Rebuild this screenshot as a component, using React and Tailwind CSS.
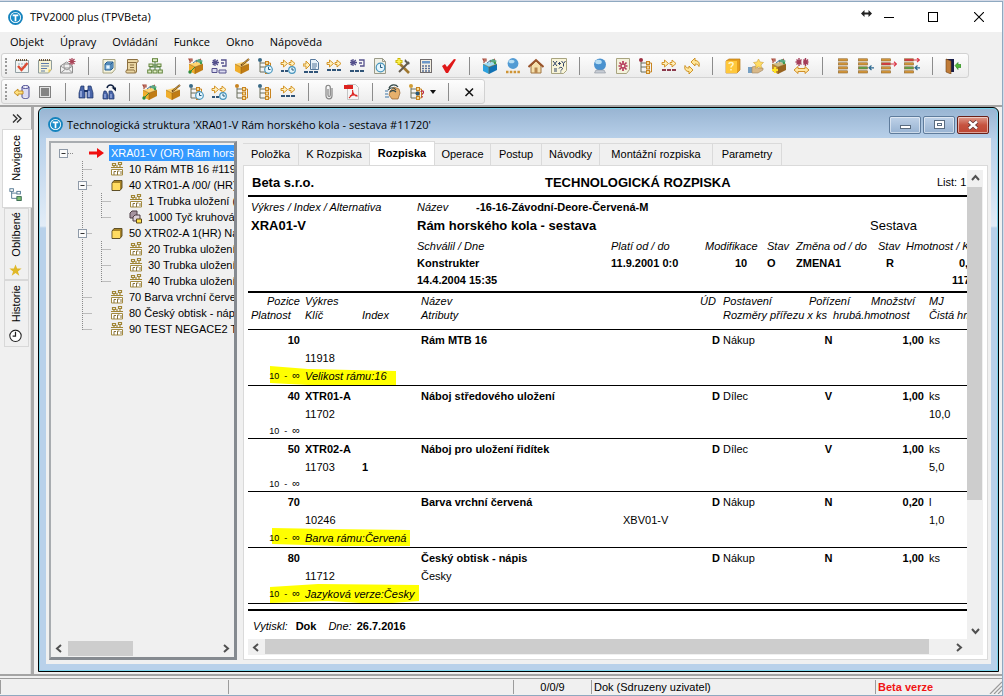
import React, { Fragment } from "react";

/* ---------- icon building blocks, all on a 16 x 16 grid ---------- */

function Svg({ children, className = "h-4 w-4" }) {
  return (
    <svg viewBox="0 0 16 16" className={`shrink-0 ${className}`} aria-hidden="true" fill="none">
      {children}
    </svg>
  );
}

const Box3D = ({ top = "#ffd470", left = "#f0ae2c", right = "#c07c14" }) => (
  <g>
    <path d="M1 6 9 4l6 2-8 3z" fill={top} />
    <path d="M1 6l6 3v7l-6-3z" fill={left} />
    <path d="M7 9l8-3v6l-8 4z" fill={right} />
    <path d="M1 6l6 3v7M7 9l8-3" stroke="#8a5a10" strokeWidth=".5" />
  </g>
);

const Flags = () => (
  <g>
    <path d="M2 1v4M1 1h3v2H2zM8 4l5-3" stroke="#a84838" strokeWidth="1.2" />
    <path d="M7 3l4-2 4 2-3 2z" fill="#5aa884" />
    <path d="M5 5l4-3" stroke="#4878a0" />
    <circle cx="13" cy="5" r="1.2" fill="#3c9a4c" />
  </g>
);

const TreeShape = ({ root = "#3a6a86", c = "#c88420" }) => (
  <g>
    <circle cx="3" cy="2" r="2" fill={root} />
    <path d="M3 4v10h5M3 5h6M3 9h5" stroke="#6b6f5c" />
    <g fill="#f8dc96" stroke={c}>
      <rect x="8.5" y="3.5" width="3" height="3" />
      <rect x="8.5" y="8" width="3" height="3" />
      <rect x="8.5" y="12.5" width="3" height="3" />
    </g>
    <path d="M12 5h1.5v9H12" stroke={c} />
  </g>
);

const ClockShape = ({ x = 11.5, y = 11.5, r = 3.8 }) => (
  <g>
    <circle cx={x} cy={y} r={r} fill="#e4f5fd" stroke="#4795bd" strokeWidth="1.2" />
    <path d={`M${x} ${y - r + 1.2}v${r - 1.2}h2`} stroke="#24587c" />
  </g>
);

const TwinArrows = () => (
  <g fill="#fff0bc" stroke="#d08c18" strokeWidth=".9">
    <path d="M1 4.5h2.5V2l4 3.5-4 3.500V6.5H1z" />
    <path d="M9 4.5h2V2l4 3.5L11 9V6.5H9z" />
  </g>
);

const Dashes = ({ c = "#305478", y = 12 }) => <path d={`M1 ${y}h4M6 ${y}h4M11 ${y}h4`} stroke={c} strokeWidth="2" />;

const Hash = ({ c = "#54508c" }) => (
  <path d="M4 1v7M1 4.5h7M1.8 2l5 5M6.8 2l-5 5M10 2h5v6h-4M10 5h3" stroke={c} strokeWidth="1.3" />
);

const Stack = ({ colors = ["#d89a3c", "#d89a3c", "#d89a3c", "#d89a3c"] }) => (
  <g>
    {colors.map((c, i) => (
      <rect key={i} x=".5" y={i * 4 + 0.8} width="9" height="2.2" fill={c} stroke="#8a6024" strokeWidth=".6" />
    ))}
  </g>
);

const Sheet = ({ fill = "#f4f2dc" }) => (
  <path d="M2 1.5h12v10l-3 3.5H2z" fill={fill} stroke="#a8a480" />
);

const Spiral = () => <path d="M2 2h12" stroke="#6e5638" strokeWidth="2" strokeDasharray="1 1" />;

const ICONS = {
  calendar: (
    <Svg>
      <path d="M1.5 2.5h13v12h-13z" fill="#f1f4f3" stroke="#93a0a4" />
      <Spiral />
      <path d="M4 6h9M4 9h9" stroke="#9aabb8" strokeDasharray="2 1" />
      <path d="M4 8l3.5 4L13.5 5" stroke="#dc4b34" strokeWidth="2.4" />
    </Svg>
  ),
  notepad: (
    <Svg>
      <path d="M1.5 2.5h13v9l-3 3.5h-10z" fill="#f7f3d4" stroke="#8f9c9c" />
      <Spiral />
      <path d="M4 5.5h8M4 8h8M4 10.5h6M4 13h4" stroke="#5d7cac" />
      <path d="M14.5 11.5h-3V15z" fill="#e7cb58" />
    </Svg>
  ),
  mail: (
    <Svg>
      <path d="M.5 8l6-4 6 4v7H.5z" fill="#f0f0f0" stroke="#8c8c8c" />
      <path d="M4 6h6v4H4zM.5 8L7 12l5.5-4M.5 15l5-4M12.5 15l-4-4" stroke="#969696" />
      <path d="M12 0v7M8.5 3.5h7M9.500 1l5 5M14.5 1l-5 5" stroke="#a84458" strokeWidth="1.2" />
    </Svg>
  ),
  pageCube: (
    <Svg>
      <Sheet />
      <path d="M4 6l2-2h6v6l-2 2H4z" fill="#85b8df" stroke="#255c92" />
      <path d="M4 6h6v6M10 6l2-2" stroke="#255c92" />
      <rect x="5.5" y="7.5" width="3" height="3" fill="#eaf6ff" />
    </Svg>
  ),
  scroll: (
    <Svg>
      <path d="M3.5 1.5h10c1 1 1 3-1 3v8.5c0 2-1 2-2 2h-8c-1-1-1-3 1-3z" fill="#ead6a3" stroke="#8c7040" />
      <path d="M4 4.5h8M6 7h4M6 9.5h4M2.5 12h7.5c1 1 1 2 1 3" stroke="#8c7040" />
    </Svg>
  ),
  orgGreen: (
    <Svg>
      <path d="M8 4v8M3 12V9h10v3M3 7h10" stroke="#4c7c40" />
      <g fill="#e0edc6" stroke="#62843c">
        <rect x="5.5" y=".7" width="5" height="3" />
        <rect x="2" y="6" width="4" height="2.5" />
        <rect x="10" y="6" width="4" height="2.5" />
        <rect x=".7" y="12" width="4" height="3" />
        <rect x="6" y="12" width="4" height="3" />
        <rect x="11.3" y="12" width="4" height="3" />
      </g>
    </Svg>
  ),
  boxFlags: (
    <Svg>
      <Box3D />
      <Flags />
      <circle cx="2" cy="14" r="1.700" fill="#2c8c3c" />
      <path d="M3 13L7 9" stroke="#2c8c3c" />
    </Svg>
  ),
  hashGrid: (
    <Svg>
      <Hash />
      <path d="M1 10.5h5v4H1zM8 12h7v3H8z" fill="#dcdcf0" stroke="#54508c" />
    </Svg>
  ),
  boxPencil: (
    <Svg>
      <Box3D />
      <path d="M15 1L7 7.5" stroke="#6c441c" strokeWidth="2" />
      <path d="M15 1L8 6.5" stroke="#f0c044" strokeWidth=".8" />
    </Svg>
  ),
  treeClock: (
    <Svg>
      <TreeShape />
      <ClockShape />
    </Svg>
  ),
  arrowsClock: (
    <Svg>
      <TwinArrows />
      <path d="M1 13h3M5 13h3" stroke="#305478" strokeWidth="2" />
      <ClockShape x={12} y={12} r={3.3} />
    </Svg>
  ),
  arrowsPage: (
    <Svg>
      <path d="M0 6h3V3l4 4-4 4V8H0z" fill="#fff0bc" stroke="#d08c18" strokeWidth=".9" />
      <path d="M7.5 1.5h5l3 3v7h-8z" fill="#e8f1f8" stroke="#56789c" />
      <path d="M9 6h5M9 8h5M9 10h4" stroke="#56789c" />
      <Dashes y={14} />
    </Svg>
  ),
  arrows: (
    <Svg>
      <TwinArrows />
      <Dashes />
    </Svg>
  ),
  hashDash: (
    <Svg>
      <Hash />
      <Dashes y={13} />
    </Svg>
  ),
  pageClock: (
    <Svg>
      <path d="M2.5 .5h8l3 3v12h-11z" fill="#eff0e6" stroke="#9a9a88" />
      <path d="M10.5 .5v3h3" stroke="#9a9a88" />
      <ClockShape x={8.5} y={9.5} r={4.3} />
    </Svg>
  ),
  tools: (
    <Svg>
      <path d="M5 6l9 9" stroke="#a07830" strokeWidth="2.6" />
      <path d="M14 4L4 14" stroke="#665c4c" strokeWidth="2" />
      <path d="M10 1l5 5-2 .5-3.5-3z" fill="#5c5c54" />
      <path d="M4 0v7M.5 3.5h7" stroke="#c8b400" strokeWidth="3" />
      <path d="M4 1v5M1.5 3.5h5" stroke="#fff450" strokeWidth="1.6" />
    </Svg>
  ),
  calculator: (
    <Svg>
      <rect x="2.5" y="1.5" width="11" height="13" fill="#f3efe2" stroke="#716c6c" />
      <rect x="4" y="3" width="8" height="2.5" fill="#6c98c8" />
      <path d="M4 8h8M4 10.5h8M4 13h8" stroke="#576f98" strokeWidth="1.5" strokeDasharray="2 1" />
    </Svg>
  ),
  redCheck: (
    <Svg>
      <path d="M1 8l3-2 2 3L13 1l2 .5L7 15H5z" fill="#e01818" />
    </Svg>
  ),
  blueBox: (
    <Svg>
      <Box3D top="#9cdcf4" left="#2da2e0" right="#1272b4" />
      <Flags />
    </Svg>
  ),
  sphereDots: (
    <Svg>
      <circle cx="8" cy="5.5" r="5.4" fill="#529bd4" />
      <ellipse cx="6.5" cy="3.5" rx="3" ry="1.8" fill="#b7def4" />
      <path d="M1 14h14" stroke="#cf9434" strokeWidth="2.4" strokeDasharray="2.5 1.3" />
    </Svg>
  ),
  house: (
    <Svg>
      <path d="M3 8l5-5 5 5v7H3z" fill="#f5dfab" stroke="#a07440" />
      <path d="M.5 9L8 2l7.5 7" stroke="#9a552c" strokeWidth="2" />
      <rect x="6.5" y="9.5" width="3" height="5.5" fill="#b88850" />
    </Svg>
  ),
  formula: (
    <Svg>
      <path d="M.5 .5h15v12l-3 3H.5z" fill="#f8f4d8" stroke="#a8a480" />
      <path
        d="M2 3l4 5M6 3L2 8M7 5.5h3M8.5 4v3M10.500 3l2 2.500L14.500 3M12.500 5.500v3M3 11h3M3 13h3M8 10.5c0-1.500 3.500-1.500 3.500 0s-1.700 1-1.700 2M9.800 13.500v1"
        stroke="#304468"
      />
    </Svg>
  ),
  crystal: (
    <Svg>
      <circle cx="8" cy="6.5" r="6" fill="#4a92cf" />
      <ellipse cx="6.5" cy="4" rx="3.3" ry="2.2" fill="#b7def4" />
      <path d="M4 12h8l1.5 3h-11z" fill="#c7ccd4" stroke="#8b929c" strokeWidth=".6" />
    </Svg>
  ),
  redGearPage: (
    <Svg>
      <path d="M1.500 .5h13v11l-3 4h-10z" fill="#f4f2dc" stroke="#a8a480" />
      <path d="M8 3v10M3.5 8h9M4.5 4.5l7 7M11.5 4.5l-7 7" stroke="#b43858" strokeWidth="1.700" />
      <circle cx="8" cy="8" r="1.3" fill="#f4f2dc" />
    </Svg>
  ),
  treeMaroon: (
    <Svg>
      <TreeShape root="#9c3040" />
    </Svg>
  ),
  arrowsMaroon: (
    <Svg>
      <TwinArrows />
      <Dashes c="#8c3a4c" />
    </Svg>
  ),
  refresh: (
    <Svg>
      <g fill="#ffe69a" stroke="#c98a18" strokeWidth=".9">
        <path d="M7 4l4-4v2.5c3 0 5 2 4 6-1-2-2-2.5-4-2.500V8z" />
        <path d="M9 12l-4 4v-2.5c-3 0-5-2-4-6 1 2 2 2.5 4 2.500V8z" />
      </g>
    </Svg>
  ),
  goldBox: (
    <Svg>
      <path d="M1 3l3-2h11v11l-3 3H1z" fill="#e8a01c" stroke="#b87818" strokeWidth=".7" />
      <path d="M1 3h11v12H1z" fill="#ffc83c" />
      <path d="M4 6c0-2 4-2 4 0s-2 1.5-2 3.5M6 11v1.5" stroke="#fff6c8" strokeWidth="1.5" />
    </Svg>
  ),
  handStar: (
    <Svg>
      <path d="M0 9h4v6H0z" fill="#76a0c4" />
      <path d="M4 9l4-1 2 2h5v2l-5 3H4z" fill="#d8b888" stroke="#9f8560" strokeWidth=".6" />
      <path d="M10.5 1l1.6 3 3.4.5-2.5 2.4.6 3.4-3.100-1.600-3 1.600.5-3.400L5.5 4.500 9 4z" fill="#ffdc64" stroke="#cfa23c" strokeWidth=".6" />
    </Svg>
  ),
  boxStar: (
    <Svg>
      <Box3D top="#d0bc84" left="#c08c34" right="#986420" />
      <Flags />
      <path d="M4 9v6M1 12h6" stroke="#ffe424" strokeWidth="2.2" />
    </Svg>
  ),
  gearsArrow: (
    <Svg>
      <path d="M5 0v8M1.5 4h6M2.5 1.500l5 5M7.5 1.500l-5 5M11.500 0v8M9 4h5.500M9.500 1.500l4.500 5M14 1.500l-4.500 5" stroke="#a43c58" strokeWidth="1.4" />
      <path d="M0 12l4-3.5v2h7v-2l4 3.500-4 3.500v-2H4v2z" fill="#ffe5a0" stroke="#cc8718" strokeWidth=".9" />
    </Svg>
  ),
  list: (
    <Svg>
      <g transform="translate(3 0)">
        <Stack />
      </g>
    </Svg>
  ),
  listBlue: (
    <Svg>
      <Stack colors={["#d89a3c", "#d89a3c", "#58a850", "#d89a3c"]} />
      <path d="M16 9.800h-5M13.5 7.500L11 9.800l2.500 2.200" stroke="#2c6890" strokeWidth="1.2" />
    </Svg>
  ),
  listRed: (
    <Svg>
      <Stack colors={["#d89a3c", "#dc3848", "#d89a3c", "#d89a3c"]} />
      <path d="M10 6h5.5M13 3.800L15.500 6 13 8.200" stroke="#dc3848" strokeWidth="1.2" />
    </Svg>
  ),
  listBoth: (
    <Svg>
      <Stack colors={["#dc3848", "#d89a3c", "#58a850", "#d89a3c"]} />
      <path d="M10 2h5.5M13 0l2.500 2L13 4" stroke="#dc3848" strokeWidth="1.2" />
      <path d="M16 9.800h-5M13.5 7.500L11 9.800l2.500 2.200" stroke="#2c6890" strokeWidth="1.2" />
    </Svg>
  ),
  door: (
    <Svg>
      <path d="M1 1h8v13H1z" fill="#181c48" />
      <path d="M1 1l5 2v13l-5-2z" fill="#c07c38" stroke="#6f4014" strokeWidth=".6" />
      <path d="M10 7.500l3-3v2h3v3h-3v2z" fill="#50b838" stroke="#2a7c20" strokeWidth=".6" />
    </Svg>
  ),
  importDb: (
    <Svg>
      <path d="M8 3h7v10H8z" fill="#dcdcf4" />
      <ellipse cx="11.5" cy="3" rx="3.5" ry="1.5" fill="#f4f4fc" stroke="#4c4c94" />
      <path d="M8 3v10c0 2 7 2 7 0V3" stroke="#4c4c94" />
      <path d="M0 8.500L4 5v2h5v3H4v2z" fill="#ffe080" stroke="#bf8818" strokeWidth=".9" />
    </Svg>
  ),
  stop: (
    <Svg>
      <rect x="2.5" y="2.5" width="11" height="11" fill="#e4e4e4" stroke="#808080" />
      <rect x="4" y="4" width="8" height="8" fill="#848484" />
    </Svg>
  ),
  binoculars: (
    <Svg>
      <path d="M3 2h3v3l1 3v6H1V9zM10 2h3l2 7v5H9V8l1-3z" fill="#4864a8" stroke="#1c3468" strokeWidth=".7" />
      <path d="M3 7v6M11 7v6" stroke="#b8c8f4" strokeWidth="1.2" />
      <path d="M6 7h4" stroke="#1c3468" strokeWidth="2" />
    </Svg>
  ),
  binocularsNext: (
    <Svg>
      <path d="M3 7h2l2 4v4H2v-4zM8 7h3l2 4v4H8z" fill="#4864a8" stroke="#1c3468" strokeWidth=".7" />
      <path d="M4 10v4M10 10v4" stroke="#b8c8f4" />
      <path d="M6 4c1-4 6-4 7 0" stroke="#102040" strokeWidth="1.5" />
      <path d="M10.5 3.500H15v4z" fill="#102040" />
    </Svg>
  ),
  treeGold: (
    <Svg>
      <TreeShape root="#c88420" />
    </Svg>
  ),
  tree: (
    <Svg>
      <TreeShape />
    </Svg>
  ),
  clip: (
    <Svg>
      <path d="M11 4v7.5c0 4.500-6 4.500-6 0V3.500c0-3 4.300-3 4.300 0V11c0 2-2.300 2-2.300 0V5" stroke="#848484" strokeWidth="1.2" />
    </Svg>
  ),
  pdf: (
    <Svg>
      <path d="M3.5 .5h8l3 3v12h-11z" fill="#f6f6f6" stroke="#c4c4c4" />
      <path d="M0 1h9v4H0z" fill="#dc2420" />
      <path d="M8.500 6c1 3-1 6-3.500 8M8.700 8c1 3 2 4 5 4M6 12c2-1 5-1.500 7-.5" stroke="#dc2420" strokeWidth="1.2" />
    </Svg>
  ),
  grab: (
    <Svg>
      <path d="M5 7l4-4 5 2 1 4-2 6H7L4 11z" fill="#e6b06c" stroke="#94602c" strokeWidth=".7" />
      <path d="M4 4c2-4 7-4 9-1M3 6c3-3 6-3 8 0M5 8c2-2 4-2 6 0" stroke="#334848" strokeWidth="1.2" />
      <path d="M0 7h3M0 10h3M0 13h4" stroke="#3d74a4" />
    </Svg>
  ),
  treeHelp: (
    <Svg>
      <TreeShape root="#d09c34" />
      <circle cx="9.5" cy="9.500" r="2" fill="#285878" />
      <path d="M13 8c0-1.500 2.500-1.500 2.500.2s-1.300 1-1.300 2.600M14.200 12v1.500" stroke="#b82840" strokeWidth="1.2" />
    </Svg>
  ),
  close: (
    <Svg>
      <path d="M4.5 4.500l7.500 7.500M12 4.500L4.500 12" stroke="#111" strokeWidth="1.5" />
    </Svg>
  ),
};

const TOOLBAR_MAIN = [
  ["calendar", "notepad", "mail"],
  ["pageCube", "scroll", "orgGreen"],
  ["boxFlags", "hashGrid", "boxPencil", "treeClock", "arrowsClock", "arrowsPage", "arrows", "hashDash", "pageClock", "tools", "calculator", "redCheck"],
  ["blueBox", "sphereDots", "house", "formula"],
  ["crystal", "redGearPage", "treeMaroon", "arrowsMaroon", "refresh"],
  ["goldBox", "handStar", "boxStar", "gearsArrow"],
  ["list", "listBlue", "listRed", "listBoth"],
  ["door"],
];

const TOOLBAR_WINDOW = [
  ["importDb", "stop"],
  ["binoculars", "binocularsNext"],
  ["boxFlags", "boxPencil", "treeClock", "arrowsClock", "treeGold", "tree", "arrows"],
  ["clip", "pdf"],
  ["grab", "treeHelp", "dropdown"],
  ["close"],
];

function Toolbar({ groups, label }) {
  return (
    <div
      role="toolbar"
      aria-label={label}
      className="flex h-[25px] w-fit items-center rounded-[3px] border border-[#d2d2d2] bg-gradient-to-b from-[#fdfdfd] to-[#ececec] pr-[4px]"
    >
      <span className="ml-[3px] mr-[3px] h-4 w-[2px] border-l-2 border-dotted border-[#9a9a9a]" />
      {groups.map((group, i) => (
        <Fragment key={i}>
          {i > 0 && (
            <span className="flex w-[18px] justify-center">
              <span className="h-[18px] w-px bg-[#8c8c8c]" />
            </span>
          )}
          {group.map((name) =>
            name === "dropdown" ? (
              <button key={name} type="button" aria-label={name} className="flex w-[12px] items-center justify-center">
                <svg viewBox="0 0 6 4" className="h-1 w-1.5" aria-hidden="true">
                  <path d="M0 0h6L3 4z" fill="#111" />
                </svg>
              </button>
            ) : (
              <button key={name} type="button" aria-label={name} className="flex h-[23px] w-[23px] items-center justify-center">
                {ICONS[name]}
              </button>
            )
          )}
        </Fragment>
      ))}
    </div>
  );
}

function Logo() {
  return (
    <Svg className="h-[15px] w-[15px]">
      <circle cx="8" cy="8" r="6.9" fill="#fff" stroke="#1583bd" strokeWidth="2" />
      <circle cx="8" cy="8" r="5" fill="#1a8cc8" />
      <path d="M5 5.7h6M8 5.700V12" stroke="#fff" strokeWidth="1.8" />
    </Svg>
  );
}

/* ---------- navigation rail ---------- */

function RailTab({ icon, children, active, className }) {
  return (
    <button
      type="button"
      className={`flex items-center justify-center border border-[#d8d8d8] ${className} ${
        active ? "w-[30px] border-r-0 bg-white pr-1" : "ml-[2px] w-[25px] self-start bg-[#f0f0f0] pr-px"
      }`}
    >
      <span className="flex rotate-180 items-center gap-[7px] text-[11px] leading-4 [writing-mode:vertical-rl]">
        <span className="rotate-180">{icon}</span>
        {children}
      </span>
    </button>
  );
}

function Rail() {
  return (
    <nav className="flex w-[34px] shrink-0 flex-col border-r-[3px] border-[#a9a9a9] bg-[#f0f0f0] pl-[2px]">
      <button type="button" aria-label="Rozbalit" className="flex h-[22px] items-center justify-center">
        <svg viewBox="0 0 10 9" className="h-[9px] w-[10px]" fill="none" stroke="#333" strokeWidth="1.4" aria-hidden="true">
          <path d="M1 .5l4 4-4 4M5 .5l4 4-4 4" />
        </svg>
      </button>
      <div className="flex flex-1 flex-col border-r border-[#dcdcdc]">
        <RailTab
          active
          className="h-[79px]"
          icon={
            <Svg className="h-[14px] w-[14px]">
              <path d="M3 4v8h6M3 6h6" stroke="#4a708c" />
              <rect x="1" y="1" width="4" height="3" fill="#fff" stroke="#4a708c" />
              <rect x="9" y="4" width="4" height="3" fill="#fff" stroke="#4a708c" />
              <rect x="9" y="10" width="5" height="4.5" fill="#7fc070" stroke="#2c5f48" />
            </Svg>
          }
        >
          Navigace
        </RailTab>
        <RailTab
          className="h-[72px]"
          icon={
            <Svg className="h-[13px] w-[13px]">
              <path d="M8 1l2 5h5.5L11 9.5l1.7 5.500L8 11.5 3.300 15 5 9.500.5 6H6z" fill="#e0b828" />
            </Svg>
          }
        >
          Oblíbené
        </RailTab>
        <RailTab
          className="h-[67px]"
          icon={
            <Svg className="h-[13px] w-[13px]">
              <circle cx="8" cy="8" r="7" fill="#fff" stroke="#222" strokeWidth="1.3" />
              <path d="M8 3v5.500H4.5" stroke="#222" strokeWidth="1.5" />
            </Svg>
          }
        >
          Historie
        </RailTab>
      </div>
    </nav>
  );
}

/* ---------- structure tree ---------- */

const TREE = [
  { level: 0, open: true, icon: "arrow", text: "XRA01-V (OR) Rám hors", selected: true },
  { level: 1, icon: "part", text: "10 Rám MTB 16 #119", line: "mid" },
  { level: 1, open: true, icon: "cube", text: "40 XTR01-A /00/ (HR)", line: "mid" },
  { level: 2, icon: "part", text: "1 Trubka uložení (", line: "mid", trunk: true },
  { level: 2, icon: "bars", text: "1000 Tyč kruhová", line: "end", trunk: true },
  { level: 1, open: true, icon: "cube", text: "50 XTR02-A 1(HR) Ná", line: "mid" },
  { level: 2, icon: "part", text: "20 Trubka uložení", line: "mid", trunk: true },
  { level: 2, icon: "part", text: "30 Trubka uložení", line: "mid", trunk: true },
  { level: 2, icon: "part", text: "40 Trubka uložení", line: "end", trunk: true },
  { level: 1, icon: "part", text: "70 Barva vrchní červe", line: "mid" },
  { level: 1, icon: "part", text: "80 Český obtisk - náp", line: "mid" },
  { level: 1, icon: "part", text: "90 TEST NEGACE2 TE", line: "end" },
];

const TREE_ICONS = {
  part: (
    <svg viewBox="0 0 14 14" className="h-[14px] w-[14px] shrink-0" fill="none" aria-hidden="true">
      <path d="M2.5 1.5h3v2h-3zM8.5 .5h3v2h-3zM1 5.5h12M4 3.5v2M10 3v3M7 3v3" stroke="#a08534" strokeWidth="1.2" />
      <path d="M1.5 7.5h11v5.5h-11z" fill="#fff" stroke="#a38b40" />
      <path d="M4 13V9.5h2M7.500 13V9h2M11 12V9" stroke="#87733c" />
    </svg>
  ),
  cube: (
    <svg viewBox="0 0 14 14" className="h-[14px] w-[14px] shrink-0" aria-hidden="true">
      <path d="M2 5l2-2.500h8V10l-2 2.500H2z" fill="#a88428" stroke="#52441c" strokeWidth=".9" />
      <path d="M2.500 5H10v7H2.500z" fill="#ffdb61" />
    </svg>
  ),
  bars: (
    <svg viewBox="0 0 14 14" className="h-[14px] w-[14px] shrink-0" aria-hidden="true">
      <path d="M1 3l2-2h5v5L6 8H1z" fill="#a694a0" stroke="#4c3c44" />
      <path d="M4 7l2-2h5v4l-2 2H4z" fill="#dcd0d8" stroke="#4c3c44" />
      <path d="M7.5 9h5v4h-5z" fill="#ffe04c" stroke="#5e4a1c" />
    </svg>
  ),
};

function Guides({ item }) {
  const width = item.level === 2 ? 78 : item.level === 1 ? 59 : 38;
  const x = item.level === 2 ? 50.5 : 31.5;
  const boxX = item.level === 0 ? 8.5 : 27.5;
  return (
    <svg width={width} height="16" className="shrink-0" fill="none" aria-hidden="true">
      <g stroke="#8a8a8a" strokeDasharray="1 1">
        {item.line && <path d={`M${x} 0V${item.line === "mid" ? 16 : 9}M${x} 8.5h10`} />}
        {item.trunk && <path d="M31.5 0V16" />}
        {item.level === 0 && <path d="M17 8.5h6" />}
      </g>
      {item.open && (
        <>
          <rect x={boxX} y="4.5" width="8" height="8" fill="#fafafa" stroke="#8f9aa8" />
          <path d={`M${boxX + 2} 8.5h4`} stroke="#333" />
        </>
      )}
    </svg>
  );
}

function Tree() {
  return (
    <div className="flex w-[188px] shrink-0 flex-col border-2 border-b-[3px] border-r-[3px] border-[#858a90] border-l-[#a8acb0] border-t-[#a8acb0] bg-[#f0f0f0]">
      <ul className="flex-1 overflow-hidden whitespace-nowrap pt-[2px] text-[11px] leading-4">
        {TREE.map((item) => (
          <li key={item.text} className="flex h-4 items-center">
            <Guides item={item} />
            {item.icon === "arrow" ? (
              <span className="flex w-5 shrink-0 items-center">
                <svg viewBox="0 0 15 10" className="h-[10px] w-[15px]" aria-hidden="true">
                  <path d="M0 3.5h8V0l7 5-7 5V6.5H0z" fill="#f00f0f" />
                </svg>
              </span>
            ) : (
              TREE_ICONS[item.icon]
            )}
            <span className={item.selected ? "flex-1 bg-[#3399ff] pl-[2px] text-white" : "pl-[5px]"}>{item.text}</span>
          </li>
        ))}
      </ul>
      <div className="flex h-[18px] items-center">
        <ScrollButton dir="left" />
        <div className="flex-1">
          <div className="h-[15px] w-[65px] bg-[#cdcdcd]" />
        </div>
        <ScrollButton dir="right" />
      </div>
    </div>
  );
}

const CHEVRONS = {
  left: "M6 1L2 4.5 6 8",
  right: "M3 1l4 3.5L3 8",
  up: "M1 6l3.5-4L8 6",
  down: "M1 3l3.5 4L8 3",
};

function ScrollButton({ dir }) {
  return (
    <button type="button" aria-label={dir} className="flex h-[17px] w-[17px] shrink-0 items-center justify-center">
      <svg viewBox="0 0 9 9" className="h-[9px] w-[9px]" fill="none" stroke="#505050" strokeWidth="2" aria-hidden="true">
        <path d={CHEVRONS[dir]} />
      </svg>
    </button>
  );
}

/* ---------- report ---------- */

const ITEMS = [
  { pos: "10", key: "11918", name: "Rám MTB 16", kind: "Nákup", get: "N", qty: "1,00", unit: "ks", attr: "Velikost rámu:16", mark: "2,0 40,3 128,5 128,20 60,20 2,17" },
  { pos: "40", drawing: "XTR01-A", key: "11702", name: "Náboj středového uložení", kind: "Dílec", get: "V", qty: "1,00", unit: "ks", net: "10,0" },
  { pos: "50", drawing: "XTR02-A", key: "11703", index: "1", name: "Náboj pro uložení řidítek", kind: "Dílec", get: "V", qty: "1,00", unit: "ks", net: "5,0" },
  { pos: "70", key: "10246", name: "Barva vrchní červená", kind: "Nákup", get: "N", qty: "0,20", unit: "l", net: "1,0", extra: "XBV01-V", attr: "Barva rámu:Červená", mark: "4,0 60,1 142,2 142,18 70,18 4,16" },
  { pos: "80", key: "11712", name: "Český obtisk - nápis", sub: "Česky", kind: "Nákup", get: "N", qty: "1,00", unit: "ks", attr: "Jazyková verze:Česky", mark: "2,3 50,0 151,1 151,17 110,20 60,17 2,19" },
];

function ItemRows({ item }) {
  return (
    <tbody className="[&>tr:first-child>td]:border-t [&>tr:first-child>td]:border-black">
      <tr className="h-[21px] font-bold">
        <td className="pr-[5px] text-right">{item.pos}</td>
        <td colSpan={2}>{item.drawing}</td>
        <td>{item.name}</td>
        <td className="pr-[3px] text-right">D</td>
        <td className="font-normal">{item.kind}</td>
        <td className="text-center">{item.get}</td>
        <td className="pr-[5px] text-right">{item.qty}</td>
        <td className="font-normal">{item.unit}</td>
      </tr>
      <tr className="h-[17px]">
        <td />
        <td>{item.key}</td>
        <td className="font-bold">{item.index}</td>
        <td>{item.sub}</td>
        <td>{item.extra}</td>
        <td colSpan={3} />
        <td>{item.net}</td>
      </tr>
      <tr className={item.attr ? "h-[18px]" : "h-[15px]"}>
        <td className="whitespace-pre pr-[5px] text-right text-[9px]">{"10  -  "}<span className="text-[11px]">∞</span></td>
        <td colSpan={8} className="italic">
          {item.attr && (
            <span className="relative">
              <svg width="152" height="21" className="absolute -left-[37px] -top-[4px] -z-10" aria-hidden="true">
                <polygon points={item.mark} fill="#ffff00" />
              </svg>
              {item.attr}
            </span>
          )}
        </td>
      </tr>
    </tbody>
  );
}

function Report() {
  return (
    <article className="isolate w-[800px] whitespace-nowrap bg-white text-[11px] leading-[13px] text-black">
      <header className="grid h-[27px] grid-cols-[293px_392px_1fr] items-center border-b-2 border-black pl-1">
        <strong className="text-[13px]">Beta s.r.o.</strong>
        <h1 className="text-[13px] font-bold">TECHNOLOGICKÁ ROZPISKA</h1>
        <span>List: 1</span>
      </header>

      <section className="border-b-2 border-black pb-[2px] pl-[3px]">
        <div className="grid h-5 grid-cols-[166px_59px_1fr] items-center italic">
          <span>Výkres / Index / Alternativa</span>
          <span>Název</span>
          <strong className="not-italic">-16-16-Závodní-Deore-Červená-M</strong>
        </div>
        <div className="grid h-4 grid-cols-[166px_453px_1fr] items-center text-[13px]">
          <strong>XRA01-V</strong>
          <strong>Rám horského kola - sestava</strong>
          <span>Sestava</span>
        </div>
        <div className="mt-[5px] grid grid-cols-[194px_94px_62px_29px_82px_28px_90px] items-center pl-[166px] font-bold leading-[17px] [&>i]:font-normal">
          <i>Schválil / Dne</i>
          <i>Platí od / do</i>
          <i>Modifikace</i>
          <i>Stav</i>
          <i>Změna od / do</i>
          <i>Stav</i>
          <i>Hmotnost / Kusy</i>
          <span>Konstrukter</span>
          <span>11.9.2001 0:0</span>
          <span className="pl-[30px]">10</span>
          <span>O</span>
          <span>ZMENA1</span>
          <span className="pl-2">R</span>
          <span className="pl-[53px]">0,00</span>
          <span>14.4.2004 15:35</span>
          <span className="col-span-5" />
          <span className="pl-[46px]">11720</span>
        </div>
      </section>

      <table className="w-full table-fixed border-separate border-spacing-0">
        <colgroup>
          <col className="w-[57px]" />
          <col className="w-[57px]" />
          <col className="w-[59px]" />
          <col className="w-[202px]" />
          <col className="w-[100px]" />
          <col className="w-[84px]" />
          <col className="w-[43px]" />
          <col className="w-[79px]" />
          <col />
        </colgroup>
        <thead className="text-left italic [&_th]:font-normal">
          <tr className="h-[16px]">
            <th className="pr-[5px] text-right">Pozice</th>
            <th colSpan={2}>Výkres</th>
            <th>Název</th>
            <th className="pr-[7px] text-right">ÚD</th>
            <th>Postavení</th>
            <th>
              <span className="pl-[2px]">Pořízení</span>
            </th>
            <th className="pr-[14px] text-right">Množství</th>
            <th>MJ</th>
          </tr>
          <tr className="h-[20px] align-top">
            <th className="pl-[3px]">Platnost</th>
            <th>Klíč</th>
            <th>Index</th>
            <th>Atributy</th>
            <th />
            <th colSpan={3} className="whitespace-pre">{"Rozměry přířezu x ks  hrubá.hmotnost"}</th>
            <th>Čistá hmotnost</th>
          </tr>
        </thead>
        {ITEMS.map((item) => (
          <ItemRows key={item.pos} item={item} />
        ))}
      </table>

      <footer className="border-t border-black pt-[5px]">
        <div className="flex h-[29px] items-center border-t-2 border-black pl-[5px] pt-1">
          <i>Vytiskl:</i>
          <strong className="ml-2">Dok</strong>
          <i className="ml-3">Dne:</i>
          <strong className="ml-[5px]">26.7.2016</strong>
        </div>
      </footer>
    </article>
  );
}

const TABS = [
  ["Položka", "w-[56px]"],
  ["K Rozpiska", "w-[71px]"],
  ["Rozpiska", "w-[65px]"],
  ["Operace", "w-[56px]"],
  ["Postup", "w-[51px]"],
  ["Návodky", "w-[58px]"],
  ["Montážní rozpiska", "w-[113px]"],
  ["Parametry", "w-[69px]"],
];

function Detail() {
  return (
    <div className="flex min-w-0 flex-1 flex-col">
      <div role="tablist" className="flex items-end">
        {TABS.map(([name, width]) => {
          const active = name === "Rozpiska";
          return (
            <button
              key={name}
              type="button"
              role="tab"
              aria-selected={active}
              className={`whitespace-nowrap border-r border-t border-[#dadada] text-[11px] ${width} ${
                active ? "-mb-px h-[25px] bg-white pb-[2px] font-bold" : "h-[22px] bg-[#f0f0f0]"
              }`}
            >
              {name}
            </button>
          );
        })}
      </div>
      <div className="flex flex-1 flex-col border border-[#dadada] bg-white p-1">
        <div className="grid flex-1 grid-cols-[minmax(0,1fr)_16px] grid-rows-[minmax(0,1fr)_16px] bg-[#f0f0f0]">
          <div className="overflow-hidden bg-white">
            <Report />
          </div>
          <div className="flex flex-col items-center">
            <ScrollButton dir="up" />
            <div className="flex-1 self-stretch">
              <div className="h-[72%] w-[15px] bg-[#cdcdcd]" />
            </div>
            <ScrollButton dir="down" />
          </div>
          <div className="flex items-center">
            <ScrollButton dir="left" />
            <div className="flex-1 self-stretch">
              <div className="h-[15px] w-[97%] bg-[#cdcdcd]" />
            </div>
            <ScrollButton dir="right" />
          </div>
        </div>
      </div>
    </div>
  );
}

function ChildWindow() {
  const button = "flex h-[18px] w-8 items-center justify-center rounded-[2px] border shadow-[inset_0_0_0_1px_rgba(255,255,255,0.5)]";
  return (
    <section className="flex flex-1 flex-col rounded-t-[6px] border border-black bg-[linear-gradient(to_bottom,#98b4d2_0px,#b9d1ea_32px,#e2ecf7_118px,#b9d1ea_120px)] px-[7px] pb-[7px] shadow-[inset_0_0_0_1px_#7ad4ec]">
      <header className="flex h-[30px] items-center pl-[2px] pt-[3px]">
        <Logo />
        <h2 className="ml-1 flex-1 pt-[2px] font-['Open_Sans',sans-serif] text-[11px]">
          Technologická struktura 'XRA01-V Rám horského kola - sestava #11720'
        </h2>
        <div className="flex gap-[2px] pr-[2px]">
          <button type="button" aria-label="Minimalizovat" className={`${button} border-[#5f7c9c] bg-gradient-to-b from-[#bfd2e8] to-[#98b3d2]`}>
            <span className="mt-1 h-1 w-[11px] border border-[#5a6c80] bg-white" />
          </button>
          <button type="button" aria-label="Obnovit" className={`${button} border-[#5f7c9c] bg-gradient-to-b from-[#bfd2e8] to-[#98b3d2]`}>
            <span className="flex h-[9px] w-[11px] items-center justify-center border border-[#5a6c80] bg-white">
              <span className="h-[3px] w-[5px] border border-[#5a6c80]" />
            </span>
          </button>
          <button type="button" aria-label="Zavřít" className={`${button} border-[#6a2018] bg-gradient-to-b from-[#dd9a8c] via-[#c65340] to-[#bc4634]`}>
            <svg viewBox="0 0 12 10" className="h-[10px] w-3" fill="none" aria-hidden="true">
              <path d="M2 1.500l8 7M10 1.500l-8 7" stroke="#5c3030" strokeWidth="4" />
              <path d="M2 1.500l8 7M10 1.500l-8 7" stroke="#fff" strokeWidth="2.4" />
            </svg>
          </button>
        </div>
      </header>
      <div className="flex flex-1 gap-[6px] bg-[#f0f0f0] px-[3px] pb-1 pt-[3px]">
        <Tree />
        <Detail />
      </div>
    </section>
  );
}

const MENU = ["Objekt", "Úpravy", "Ovládání", "Funkce", "Okno", "Nápověda"];

export default function App() {
  return (
    <div className="flex min-h-screen flex-col bg-[#d5dbe8] pr-px pt-px font-['Liberation_Sans',Arial,sans-serif] text-[11px] text-black">
      <div className="flex flex-1 flex-col border border-l-0 border-[#8fa9c0] bg-[#f0f0f0]">
        <header className="flex h-[30px] items-center bg-white pl-2 font-['Open_Sans',sans-serif]">
          <Logo />
          <h1 className="ml-[7px] flex-1 text-[11px]">TPV2000 plus (TPVBeta)</h1>
          <svg viewBox="0 0 11 7" className="-mt-2 mr-[12px] h-[7px] w-[11px]" aria-hidden="true">
            <path d="M0 3.5L3.500 0v2.500h4V0L11 3.500 7.500 7V4.500h-4V7z" fill="#222" />
          </svg>
          <button type="button" aria-label="Minimalizovat" className="flex w-[10px] justify-center">
            <span className="h-px w-[10px] bg-black" />
          </button>
          <button type="button" aria-label="Maximalizovat" className="ml-[34px] h-[10px] w-[10px] border border-black" />
          <button type="button" aria-label="Zavřít" className="ml-[36px] mr-[18px]">
            <svg viewBox="0 0 10 10" className="h-[10px] w-[10px]" stroke="#000" strokeWidth="1.1" aria-hidden="true">
              <path d="M0 0l10 10M10 0L0 10" />
            </svg>
          </button>
        </header>

        <nav className="flex h-[21px] items-center gap-4 pb-px pl-[10px] font-['Open_Sans',sans-serif] text-[11px]">
          {MENU.map((name) => (
            <button key={name} type="button">
              {name}
            </button>
          ))}
        </nav>

        <div className="flex flex-col gap-px pb-px pl-px">
          <Toolbar groups={TOOLBAR_MAIN} label="Hlavní panel" />
          <Toolbar groups={TOOLBAR_WINDOW} label="Panel okna" />
        </div>

        <main className="flex flex-1 border-y-2 border-[#a4a4a4]">
          <Rail />
          <div className="flex min-w-0 flex-1 bg-[#f0f0f0] pb-[2px] pl-[4px] pr-[3px]">
            <ChildWindow />
          </div>
        </main>

        <footer className="mt-[2px] flex h-[17px] items-center border-t border-[#9c9c9c] leading-[15px]">
          <span className="h-[14px] w-[228px] border-l border-[#9c9c9c]" />
          <span className="h-[14px] flex-1 border-l border-[#9c9c9c]" />
          <span className="h-[14px] w-[78px] border-l border-[#9c9c9c] text-center">0/0/9</span>
          <span className="h-[14px] w-[284px] border-l border-[#9c9c9c] pl-[2px]">Dok (Sdruzeny uzivatel)</span>
          <strong className="h-[14px] w-[113px] border-l border-[#9c9c9c] pl-[2px] text-[#f01414]">Beta verze</strong>
          <svg viewBox="0 0 14 14" className="h-[14px] w-[14px]" stroke="#9a9a9a" strokeWidth="1.2" aria-hidden="true">
            <path d="M2 14L14 2M6 14l8-8M10 14l4-4" />
          </svg>
        </footer>
      </div>
    </div>
  );
}
